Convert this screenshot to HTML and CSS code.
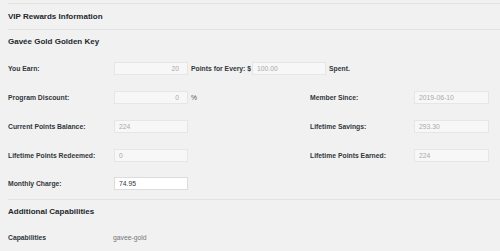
FILE: index.html
```html
<html>
<head>
  <link rel="stylesheet" href="styles.css">
</head>
<body>
<div class="page">
  <h2 class="section-title">VIP Rewards Information</h2>
  <h3 class="plan-title">Gavée Gold Golden Key</h3>

  <div class="row">
    <label class="label">You Earn:</label>
    <input class="field num" type="text" value="20" disabled>
    <span class="suffix strong tight">Points for Every: $</span>
    <input class="field" type="text" value="100.00" disabled>
    <span class="suffix strong">Spent.</span>
  </div>

  <div class="row">
    <div class="half">
      <label class="label">Program Discount:</label>
      <input class="field num" type="text" value="0" disabled>
      <span class="suffix">%</span>
    </div>
    <div class="half right">
      <label class="label">Member Since:</label>
      <input class="field" type="text" value="2019-06-10" disabled>
    </div>
  </div>

  <div class="row">
    <div class="half">
      <label class="label">Current Points Balance:</label>
      <input class="field" type="text" value="224" disabled>
    </div>
    <div class="half right">
      <label class="label">Lifetime Savings:</label>
      <input class="field" type="text" value="293.30" disabled>
    </div>
  </div>

  <div class="row">
    <div class="half">
      <label class="label">Lifetime Points Redeemed:</label>
      <input class="field" type="text" value="0" disabled>
    </div>
    <div class="half right">
      <label class="label">Lifetime Points Earned:</label>
      <input class="field" type="text" value="224" disabled>
    </div>
  </div>

  <div class="row last">
    <label class="label">Monthly Charge:</label>
    <input class="field editable" type="text" value="74.95">
  </div>

  <h2 class="section-title sub">Additional Capabilities</h2>

  <div class="cap-row">
    <span class="label">Capabilities</span>
    <span class="cap-value">gavee-gold</span>
  </div>
</div>
</body>
</html>
```

FILE: styles.css
```css
body {
  margin: 0;
  padding: 0;
  background: #f1f1f1;
  font-family: "Liberation Sans", Arial, sans-serif;
  color: #23282d;
}

.page {
  padding: 3px 0 0 8px;
}

.section-title {
  margin: 0;
  height: 25px;
  line-height: 25px;
  border-top: 1px solid #e2e2e2;
  border-bottom: 1px solid #e2e2e2;
  font-size: 8px;
  font-weight: bold;
  color: #23282d;
}

.section-title.sub {
  border-bottom: none;
  height: 24px;
  line-height: 24px;
}

.plan-title {
  margin: 0;
  height: 24px;
  line-height: 24px;
  font-size: 8px;
  font-weight: bold;
}

.row {
  display: flex;
  align-items: center;
  height: 29px;
}

.row.last {
  height: 26px;
  margin-bottom: 3px;
}

.half {
  display: flex;
  align-items: center;
  width: 302px;
}

.half.right {
  width: auto;
}

.label {
  width: 106px;
  flex-shrink: 0;
  font-size: 6.8px;
  font-weight: bold;
  color: #32373c;
}

.field {
  width: 74px;
  height: 13px;
  box-sizing: border-box;
  margin: 0;
  padding: 0 4px;
  border: 1px solid #e6e6e6;
  background: #f7f7f7;
  color: #aaa;
  font-family: "Liberation Sans", Arial, sans-serif;
  font-size: 6.8px;
  border-radius: 0;
  outline: none;
}

.field.num {
  text-align: right;
  padding-right: 8px;
}

.field.editable {
  background: #fff;
  border-color: #dcdcdc;
  color: #32373c;
}

.right .label {
  width: 104px;
}

.right .field {
  width: 75px;
}

.suffix {
  margin: 0 3px 0 3px;
  font-size: 6.8px;
  color: #555;
}

.suffix.strong {
  font-weight: bold;
  color: #32373c;
}

.suffix.tight {
  margin-right: 1px;
}

.cap-row {
  display: flex;
  align-items: center;
  height: 27px;
}

.cap-row .label {
  width: 105px;
}

.cap-value {
  font-size: 6.8px;
  color: #777;
}
```
